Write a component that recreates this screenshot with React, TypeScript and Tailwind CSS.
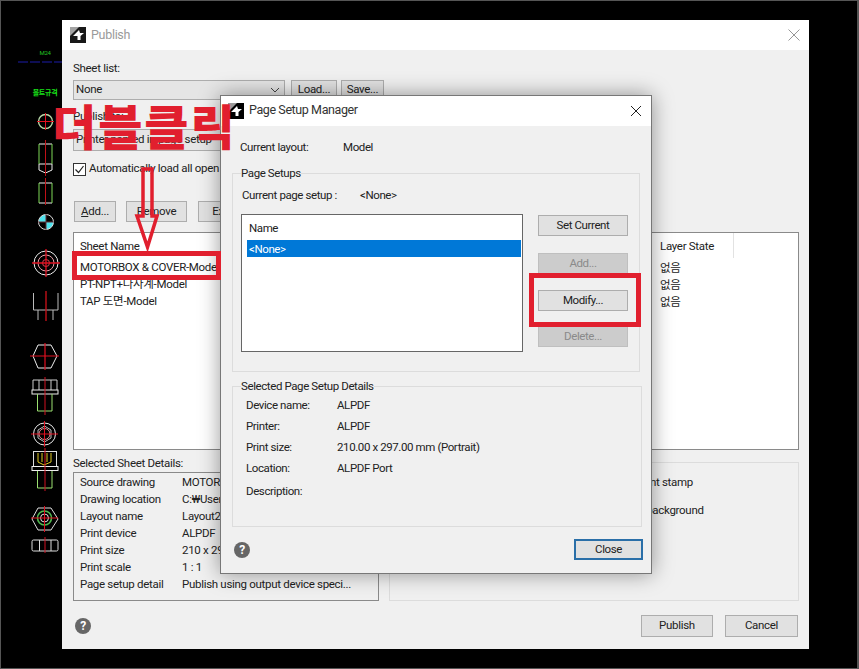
const ui = "font-['Roboto','Noto_Sans_CJK_KR',sans-serif] text-[11.5px] tracking-[-0.3px]";

function AppIcon({ className }: { className: string }) {
  return (
    <svg className={className} viewBox="0 0 16 16">
      <rect width="16" height="16" fill="#000" />
      <polygon points="0,0 9,0 0,9" fill="#9a9a9a" />
      <path d="M3 9 L9 3 L10 6 L14 6 L10.5 9 L10.5 13 L7.5 13 L7.5 9 Z" fill="#fff" />
    </svg>
  );
}

function HelpIcon() {
  return (
    <span className="flex h-4 w-4 items-center justify-center rounded-full bg-[#666] text-[12px] font-bold leading-none text-white">?</span>
  );
}

function Btn({ children, className = "", disabled = false }: { children: React.ReactNode; className?: string; disabled?: boolean }) {
  return (
    <div
      className={
        "flex h-[21px] shrink-0 items-center justify-center border leading-none " +
        (disabled ? "border-[#bfbfbf] bg-[#cccccc] text-[#8a8a8a] " : "border-[#adadad] bg-[#e1e1e1] text-[#222] ") +
        className
      }
    >
      {children}
    </div>
  );
}

function Combo({ text, className }: { text: string; className: string }) {
  return (
    <div className={"flex shrink-0 items-center justify-between border border-[#adadad] bg-[#e5e5e5] pl-[2px] pr-[4px] text-[#222] " + className}>
      <span className="whitespace-nowrap">{text}</span>
      <svg className="h-2 w-2.5" viewBox="0 0 10 8" fill="none" stroke="#444" strokeWidth="1">
        <path d="M1 2 L5 6 L9 2" />
      </svg>
    </div>
  );
}

function CadSidebar() {
  return (
    <svg className="h-[668px] w-[61px] shrink-0" viewBox="1 1 61 668" fill="none" strokeWidth="1">
      <text x="45" y="55" fontSize="6" fill="#22c422" textAnchor="middle">M24</text>
      <path d="M18 62 H62" stroke="#1c1ca8" strokeDasharray="10 2" />
      <text x="45" y="95" fontSize="7" fontWeight="700" fill="#19e019" textAnchor="middle">볼트규격</text>

      <circle cx="45.5" cy="121.5" r="7" stroke="#b8d8a8" strokeWidth="1.4" />
      <path d="M37 121.5 H54 M45.5 113 V130" stroke="#e01020" />

      <path d="M39 144 H52 M39 164 H52 M39 164 V170 L45.5 173 L52 170 V164" stroke="#eee" />
      <path d="M39 144 V164 M52 144 V164" stroke="#7ed957" />
      <path d="M45.5 140 V176" stroke="#c01018" />

      <path d="M39 183 H52 M39 203 H52" stroke="#eee" />
      <path d="M39 183 V203 M52 183 V203" stroke="#7ed957" />
      <path d="M45.5 178 V205" stroke="#c01018" />

      <path d="M46 222 V214.5 A7.5 7.5 0 0 0 38.5 222 Z M46 222 V229.5 A7.5 7.5 0 0 0 53.5 222 Z" fill="#4fe3ee" />
      <circle cx="46" cy="222" r="7.5" stroke="#ddd" />
      <path d="M38 222 H54 M46 214 V230" stroke="#603038" />

      <circle cx="46" cy="263" r="12" stroke="#eee" />
      <circle cx="46" cy="263" r="8" stroke="#e8a0a8" />
      <circle cx="46" cy="263" r="3.5" stroke="#e04050" />
      <path d="M32 263 H60 M46 249 V277" stroke="#e01020" strokeWidth="1.3" />

      <path d="M33.5 293 V310 H58 V293 M38 310 V320 M53 310 V320" stroke="#bbb" />
      <path d="M46 291 V321" stroke="#c01018" strokeWidth="1.4" />

      <path d="M38 345 H51 L57 356 L51 368 H38 L33 356 Z" stroke="#eee" />
      <path d="M30 356 H59 M45 343 V370" stroke="#e01020" strokeWidth="1.2" />

      <path d="M33 390 V380 H57 V390 M39 380 V390 M51 380 V390" stroke="#ccc" />
      <rect x="32" y="390" width="26" height="4" stroke="#eee" />
      <path d="M37.5 394 V411 H52 V394" stroke="#9be070" />
      <path d="M45 377 V415" stroke="#d01020" />

      <circle cx="44.5" cy="434" r="11" stroke="#eee" />
      <path d="M38 430 L44.5 426 L51 430 V438 L44.5 442 L38 438 Z" stroke="#bbb" />
      <circle cx="44.5" cy="434" r="5.5" stroke="#e08890" />
      <path d="M31 434 H58 M44.5 421 V447" stroke="#e01020" />

      <rect x="33.5" y="451.5" width="23" height="15" stroke="#ddd" />
      <path d="M38 453 V462 L44 465 L51 462 V453 M42 453 V462 M47 453 V462" stroke="#e0c820" />
      <rect x="32" y="466.5" width="26" height="4" stroke="#eee" />
      <path d="M37.5 471 V488 H52 V471" stroke="#9be070" />
      <path d="M45 448 V491" stroke="#d01020" />

      <path d="M38 508 H51 L58 519 L51 530 H38 L32 519 Z" stroke="#ddd" />
      <circle cx="44.5" cy="518" r="7" stroke="#4fb84f" strokeWidth="1.6" />
      <circle cx="44.5" cy="518" r="4" stroke="#ddd" />
      <path d="M31 518 H58 M44.5 506 V532" stroke="#e01020" />

      <rect x="32" y="540" width="26" height="11" rx="1.5" stroke="#ddd" />
      <path d="M39.5 540 V551 M51 540 V551" stroke="#ddd" />
      <path d="M45 537 V553" stroke="#d01020" />
    </svg>
  );
}

function SheetList() {
  const rows = ["MOTORBOX & COVER-Model", "PT-NPT+나사계-Model", "TAP 도면-Model"];
  return (
    <div className="mt-[10px] flex h-[218px] w-[726px] border border-[#8a8a8a] bg-white pl-[6px] leading-[17px] text-[#222]">
      <div className="w-[580px] pt-[5px]">
        <div className="mb-[4px] h-[17px]">Sheet Name</div>
        {rows.map((r) => (
          <div key={r} className="whitespace-nowrap">{r}</div>
        ))}
      </div>
      <div className="w-[74px] shrink-0">
        <div className="h-[25px] border-r border-[#e2e2e2] pt-[5px]">Layer State</div>
        <div className="mt-[2px]">없음</div>
        <div>없음</div>
        <div>없음</div>
      </div>
    </div>
  );
}

function SheetDetails() {
  const rows = [
    ["Source drawing", "MOTORBOX & COVER.dwg"],
    ["Drawing location", "C:₩Users₩Public₩Documents"],
    ["Layout name", "Layout2"],
    ["Print device", "ALPDF"],
    ["Print size", "210 x 297 mm"],
    ["Print scale", "1 : 1"],
    ["Page setup detail", "Publish using output device speci..."],
  ];
  return (
    <div className="flex w-[306px] flex-col">
      <div className="h-[17px] leading-[17px] text-[#222]">Selected Sheet Details:</div>
      <div className="h-[129px] border border-[#8a8a8a] pl-[6px] pt-[1px] leading-[17px] text-[#222]">
        {rows.map(([k, v]) => (
          <div key={k} className="flex whitespace-nowrap">
            <span className="w-[102px] shrink-0">{k}</span>
            <span>{v}</span>
          </div>
        ))}
      </div>
    </div>
  );
}

function PublishWindow() {
  return (
    <div className="mt-[19px] flex h-[629px] w-[747px] shrink-0 flex-col bg-[#f0f0f0]">
      <div className="flex h-[30px] shrink-0 items-center justify-between bg-white pl-[8px] pr-[9px]">
        <div className="flex items-center gap-[5px]">
          <AppIcon className="h-4 w-4 opacity-90" />
          <span className="text-[12.5px] text-[#9a9a9a]">Publish</span>
        </div>
        <svg className="h-3 w-3" viewBox="0 0 12 12" stroke="#8a8a8a" strokeWidth="0.9">
          <path d="M0.5 0.5 L11.5 11.5 M11.5 0.5 L0.5 11.5" />
        </svg>
      </div>

      <div className="flex flex-1 flex-col pl-[11px] text-[#222]">
        <div className="mt-[10px] h-4 leading-4">Sheet list:</div>
        <div className="mt-[4px] flex h-5 items-start">
          <Combo text="None" className="h-5 w-[212px]" />
          <Btn className="ml-[6px] !h-5 w-[46px]">Load...</Btn>
          <Btn className="ml-[4px] !h-5 w-[43px]">Save...</Btn>
        </div>
        <div className="mt-[8px] h-4 leading-4">Publish to:</div>
        <Combo text="Printer named in page setup" className="mt-[5px] h-[22px] w-[212px]" />
        <div className="mt-[11px] flex h-[14px] items-center gap-[3px]">
          <div className="flex h-[13px] w-[13px] items-center justify-center border border-[#333] bg-white">
            <svg className="h-[11px] w-[11px]" viewBox="0 0 11 11" fill="none" stroke="#222" strokeWidth="1.2">
              <path d="M1.5 5.5 L4.5 8.5 L9.5 2" />
            </svg>
          </div>
          <span className="whitespace-nowrap">Automatically load all open drawings</span>
        </div>
        <div className="ml-[1px] mt-[25px] flex gap-[10px]">
          <Btn className="w-[42px]"><span className="underline">A</span>dd...</Btn>
          <Btn className="w-[61px]"><span className="underline">R</span>emove</Btn>
          <Btn className="ml-[1px] w-[60px]">Export</Btn>
        </div>
        <SheetList />
        <div className="mt-[5px] flex gap-[10px]">
          <SheetDetails />
          <div className="mt-[7px] flex h-[139px] w-[410px] flex-col gap-[11px] border border-[#dcdcdc] pl-[210px] pt-[11px] leading-[17px]">
            <span className="whitespace-nowrap">Include print stamp</span>
            <span className="ml-[10px] whitespace-nowrap">Print in background</span>
          </div>
        </div>
        <div className="mt-[14px] flex items-center justify-between pl-[2px] pr-[11px]">
          <HelpIcon />
          <div className="flex gap-[12px]">
            <Btn className="h-[22px] w-[72px]">Publish</Btn>
            <Btn className="h-[22px] w-[73px]">Cancel</Btn>
          </div>
        </div>
      </div>
    </div>
  );
}

function PageSetupManager() {
  const details = [
    ["Device name:", "ALPDF"],
    ["Printer:", "ALPDF"],
    ["Print size:", "210.00 x 297.00 mm (Portrait)"],
    ["Location:", "ALPDF Port"],
  ];
  return (
    <div className="absolute left-[219px] top-[94px] flex h-[479px] w-[432px] flex-col border border-[#777] bg-[#f0f0f0] tracking-[-0.4px] text-[#222] shadow-[0_0_20px_rgba(0,0,0,0.4)]">
      <div className="flex h-[30px] shrink-0 items-center justify-between bg-white pb-[1px] pl-[7px] pr-[9px]">
        <div className="flex items-center gap-[5px]">
          <AppIcon className="h-4 w-4" />
          <span className="text-[12.5px] text-[#333]">Page Setup Manager</span>
        </div>
        <svg className="h-3 w-3" viewBox="0 0 12 12" stroke="#222" strokeWidth="1">
          <path d="M1 1 L11 11 M11 1 L1 11" />
        </svg>
      </div>

      <div className="flex flex-col pl-[11px]">
        <div className="ml-[8px] mt-[13px] flex h-4 leading-4">
          <span className="w-[103px]">Current layout:</span>
          <span>Model</span>
        </div>

        <fieldset className="mt-[10px] h-[207px] w-[408px] border border-[#dcdcdc] pl-[8px]">
          <legend className="leading-4">Page Setups</legend>
          <div className="ml-[1px] mt-[6px] flex h-4 leading-4">
            <span className="w-[118px]">Current page setup :</span>
            <span>&lt;None&gt;</span>
          </div>
          <div className="mt-[11px] flex">
            <div className="h-[138px] w-[282px] border border-[#666] bg-white pl-[5px] pt-[5px]">
              <div className="ml-[2px] h-5 leading-[17px]">Name</div>
              <div className="mr-[1px] h-[17px] bg-[#0078d7] pl-[2px] leading-[18px] text-white">&lt;None&gt;</div>
            </div>
            <div className="ml-[15px] mt-[1px] flex w-[90px] flex-col">
              <Btn>Set Current</Btn>
              <Btn disabled className="mt-[17px]">Add...</Btn>
              <Btn className="mt-[16px]">Modify...</Btn>
              <Btn disabled className="mt-[15px]">Delete...</Btn>
            </div>
          </div>
        </fieldset>

        <fieldset className="mt-[6px] h-[149px] w-[410px] border border-[#dcdcdc] pl-[8px]">
          <legend className="leading-4">Selected Page Setup Details</legend>
          <div className="ml-[5px] mt-[3px] flex flex-col gap-[5px] leading-4">
            {details.map(([k, v]) => (
              <div key={k} className="flex">
                <span className="w-[91px]">{k}</span>
                <span>{v}</span>
              </div>
            ))}
            <div className="mt-[2px]">Description:</div>
          </div>
        </fieldset>

        <div className="mt-[12px] flex w-[411px] items-center justify-between pl-[2px]">
          <HelpIcon />
          <Btn className="w-[69px] !border-2 !border-[#2a6fa8]">Close</Btn>
        </div>
      </div>
    </div>
  );
}

function Annotations() {
  return (
    <>
      <div className="absolute left-[51px] top-[88px] whitespace-nowrap text-[48px] font-black leading-[70px] tracking-[2px] text-[#e11f2e] font-['Noto_Sans_CJK_KR',sans-serif]">
        더블클릭
      </div>
      <svg className="absolute left-[130px] top-[164px] h-[88px] w-[32px]" viewBox="130 164 32 88" fill="none" stroke="#e11f2e" strokeWidth="3.5">
        <path d="M142 168 H151 V215 H156 L146.5 246 L136 215 H142 Z" />
      </svg>
      <div className="absolute left-[71px] top-[250px] h-[29px] w-[149px] border-[5px] border-[#e11f2e]" />
      <div className="absolute left-[528px] top-[272px] h-[54px] w-[112px] border-[5px] border-[#e11f2e]" />
    </>
  );
}

export default function App() {
  return (
    <div className={"relative flex h-[669px] w-[859px] items-start overflow-hidden border border-r-2 border-[#555] bg-black " + ui}>
      <CadSidebar />
      <PublishWindow />
      <PageSetupManager />
      <Annotations />
    </div>
  );
}
